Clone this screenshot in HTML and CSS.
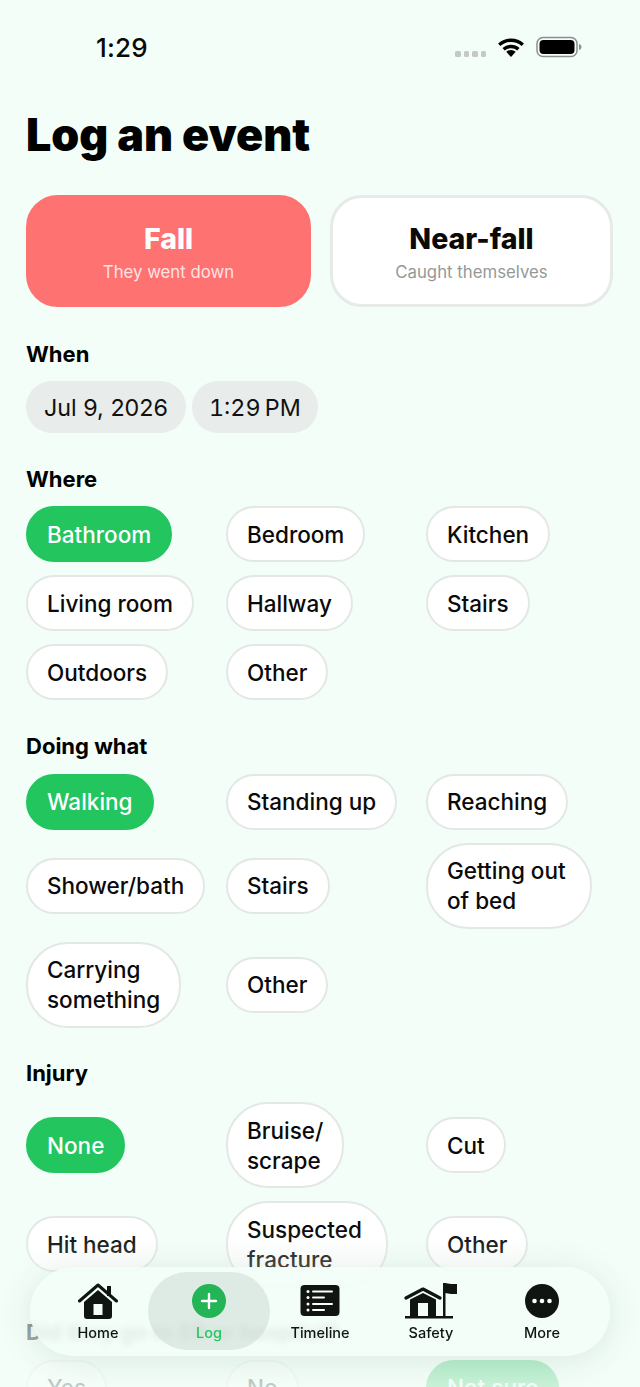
FILE: index.html
```html
<!DOCTYPE html>
<html lang="en">
<head>
<meta charset="utf-8">
<title>Log an event</title>
<link rel="stylesheet" href="styles.css">
</head>
<body>
<div class="screen">
  <header class="status">
    <span class="clock">1:29</span>
    <div class="status-icons">
      <span class="dots"><i></i><i></i><i></i><i></i></span>
      <svg class="wifi" width="28" height="20" viewBox="0 0 28 20"><path d="M2.200 7.800a17.500 17.500 0 0 1 23.600 0M6.600 12.300a11 11 0 0 1 14.800 0" fill="none" stroke="#000" stroke-width="3.400"/><path d="M14 20l-4.700-5.200a7 7 0 0 1 9.400 0z" fill="#000"/></svg>
      <svg class="battery" width="46" height="22" viewBox="0 0 46 22"><rect x="1" y="1.500" width="40" height="19" rx="6" fill="none" stroke="#8c8f8e" stroke-width="1.500"/><rect x="3.500" y="4" width="35" height="14" rx="4" fill="#000"/><path d="M43 8c1.500.4 2.500 1.500 2.500 3S44.500 13.600 43 14z" fill="#8c8f8e"/></svg>
    </div>
  </header>

  <main class="content">
    <h1 class="title">Log an event</h1>

    <div class="kinds">
      <button class="kind kind-on"><b>Fall</b><small>They went down</small></button>
      <button class="kind"><b>Near-fall</b><small>Caught themselves</small></button>
    </div>

    <h2 class="label">When</h2>
    <div class="pills">
      <span class="pill">Jul 9, 2026</span>
      <span class="pill pill-time">1:29&#8201;PM</span>
    </div>

    <h2 class="label">Where</h2>
    <div class="chips">
      <span class="chip chip-on">Bathroom</span>
      <span class="chip">Bedroom</span>
      <span class="chip">Kitchen</span>
      <span class="chip">Living room</span>
      <span class="chip">Hallway</span>
      <span class="chip">Stairs</span>
      <span class="chip">Outdoors</span>
      <span class="chip">Other</span>
    </div>

    <h2 class="label">Doing what</h2>
    <div class="chips chips-tight">
      <span class="chip chip-on">Walking</span>
      <span class="chip">Standing up</span>
      <span class="chip">Reaching</span>
      <span class="chip">Shower/bath</span>
      <span class="chip">Stairs</span>
      <span class="chip chip-roomy">Getting out<br>of bed</span>
      <span class="chip">Carrying<br>something</span>
      <span class="chip">Other</span>
    </div>

    <h2 class="label label-wide">Injury</h2>
    <div class="chips chips-tight">
      <span class="chip chip-on">None</span>
      <span class="chip">Bruise/<br>scrape</span>
      <span class="chip">Cut</span>
      <span class="chip">Hit head</span>
      <span class="chip chip-roomy">Suspected<br>fracture</span>
      <span class="chip">Other</span>
    </div>

    <h2 class="label">Did they go to ER or hospital?</h2>
    <div class="chips">
      <span class="chip">Yes</span>
      <span class="chip">No</span>
      <span class="chip chip-on">Not sure</span>
    </div>
  </main>

  <div class="fade"></div>

  <nav class="tabbar">
    <a class="tab">
      <svg width="40" height="36" viewBox="0 0 40 36"><path d="M1.500 18 20 2l18.500 16" fill="none" stroke="#101512" stroke-width="3" stroke-linecap="round" stroke-linejoin="round"/><path d="M29 3h4v10h-4z" fill="#101512"/><path fill-rule="evenodd" d="M6 19 20 7l14 12v14a3 3 0 0 1-3 3H9a3 3 0 0 1-3-3zM15.500 21v11h9V21z" fill="#101512"/></svg>
      <span>Home</span>
    </a>
    <a class="tab tab-on">
      <svg width="36" height="36" viewBox="0 0 36 36"><circle cx="18" cy="18" r="17" fill="#22b455"/><path d="M18 11v14M11 18h14" stroke="#fff" stroke-width="2.400" stroke-linecap="round"/></svg>
      <span>Log</span>
    </a>
    <a class="tab">
      <svg width="40" height="36" viewBox="0 0 40 36"><rect x="0.500" y="2" width="39" height="31" rx="4" fill="#101512"/><g fill="#fff"><circle cx="8" cy="8.500" r="1.500"/><circle cx="8" cy="14.500" r="1.500"/><circle cx="8" cy="21" r="1.500"/><circle cx="8" cy="27" r="1.500"/><rect x="12" y="7.500" width="21" height="2" rx="1"/><rect x="12" y="13.500" width="13" height="2" rx="1"/><rect x="12" y="20" width="21" height="2" rx="1"/><rect x="12" y="26" width="13" height="2" rx="1"/></g></svg>
      <span>Timeline</span>
    </a>
    <a class="tab">
      <svg width="54" height="36" viewBox="0 0 54 36"><path d="M2 15 19 6l17 9" fill="none" stroke="#101512" stroke-width="3.200" stroke-linejoin="round" stroke-linecap="round"/><path fill-rule="evenodd" d="M6 16.500 19 10l13 6.500V33H6zM14 20v13h10V20z" fill="#101512"/><rect x="1" y="33" width="48" height="2.500" fill="#101512"/><rect x="39" y="0" width="2.500" height="34" fill="#101512"/><path d="M41 0l6 1 6 0v10h-6l-6-1z" fill="#101512"/></svg>
      <span>Safety</span>
    </a>
    <a class="tab">
      <svg width="36" height="36" viewBox="0 0 36 36"><circle cx="18" cy="18" r="17" fill="#101512"/><g fill="#fff"><circle cx="10.500" cy="18" r="2.300"/><circle cx="18" cy="18" r="2.300"/><circle cx="25.500" cy="18" r="2.300"/></g></svg>
      <span>More</span>
    </a>
  </nav>
</div>
</body>
</html>
```

FILE: styles.css
```css
* { box-sizing: border-box; }
html, body { margin: 0; padding: 0; }
body {
  width: 640px;
  height: 1387px;
  overflow: hidden;
  background: #f3fef8;
  font-family: Inter, "Liberation Sans", sans-serif;
  color: #000;
}
.screen { position: relative; width: 640px; height: 1387px; overflow: hidden; }

.status {
  display: flex;
  justify-content: space-between;
  align-items: center;
  height: 94px;
  padding: 0 58px 0 96px;
}
.clock { font-size: 26px; font-weight: 500; letter-spacing: .2px; color: #0a0a0a; }
.status-icons { display: flex; align-items: center; gap: 11px; }
.dots { display: flex; gap: 3px; margin-top: 14px; margin-right: 0; }
.dots i { width: 5.500px; height: 5.500px; border-radius: 1.500px; background: #c4c8c6; }

.content { padding: 0 27px 0 26px; }
.title { margin: 10px 0 29px; font-size: 44.800px; line-height: 62px; font-weight: 900; }

.kinds { display: flex; gap: 19px; margin-bottom: 33.500px; }
.kind {
  flex: 1 1 0;
  height: 112px;
  display: flex;
  flex-direction: column;
  align-items: center;
  justify-content: center;
  gap: 4px;
  padding: 2px 0 0;
  background: #fff;
  border: 3px solid #e6eae8;
  border-radius: 32px;
  font-family: inherit;
  color: #0a0a0a;
}
.kind b { font-size: 28.500px; line-height: 36px; font-weight: 800; }
.kind small { font-size: 16.800px; line-height: 22px; color: #949997; }
.kind-on { flex: 0 0 285px; background: #ff7272; border-color: #ff7272; color: #fff; }
.kind-on small { color: #ffe3e3; }

.label { margin: 0 0 13.500px; font-size: 22px; line-height: 27px; font-weight: 700; }
.label-wide { margin-bottom: 15.500px; }

.pills { display: flex; gap: 6px; margin-bottom: 32.500px; }
.pill {
  height: 52px;
  display: flex;
  align-items: center;
  padding: 0 18px;
  border-radius: 26px;
  background: #e8ecea;
  font-size: 23.300px;
  color: #111;
}
.pill-time { padding: 0 17px; font-variant-numeric: tabular-nums; }

.chips {
  display: grid;
  grid-template-columns: repeat(3, 200px);
  align-items: center;
  justify-items: start;
  row-gap: 13px;
  margin-bottom: 33px;
}
.chips-tight { margin-bottom: 32px; }
.chip {
  padding: 11.500px 19px 10.500px;
  background: #fff;
  border: 2px solid #e3e8e5;
  border-radius: 42px;
  font-size: 22.500px;
  line-height: 30px;
  font-weight: 500;
  color: #0a0a0a;
}
.chip-roomy { padding-right: 24px; }
.chip-on { background: #22c55e; border-color: #22c55e; color: #fff; }

.fade {
  position: absolute;
  left: 0;
  right: 0;
  top: 1230px;
  bottom: 0;
  background: linear-gradient(rgba(243, 254, 248, 0), rgba(243, 254, 248, .55) 50%, rgba(243, 254, 248, .8));
}

.tabbar {
  position: absolute;
  left: 30px;
  top: 1267px;
  width: 580px;
  height: 89px;
  display: grid;
  grid-template-columns: repeat(5, 111px);
  padding: 5px 12.500px 0;
  border-radius: 45px;
  background: rgba(243, 254, 248, .8);
  backdrop-filter: blur(3px);
  box-shadow: 0 4px 36px rgba(20, 60, 40, .11);
}
.tab {
  height: 78px;
  display: flex;
  flex-direction: column;
  align-items: center;
  justify-content: flex-start;
  padding-top: 11px;
  font-size: 14.500px;
  line-height: 18px;
  font-weight: 500;
  color: #101512;
  border-radius: 39px;
}
.tab svg { margin-bottom: 5px; flex: none; }
.tab-on { margin: 0 -5.500px; background: rgba(190, 205, 198, .4); color: #22c55e; }
```
